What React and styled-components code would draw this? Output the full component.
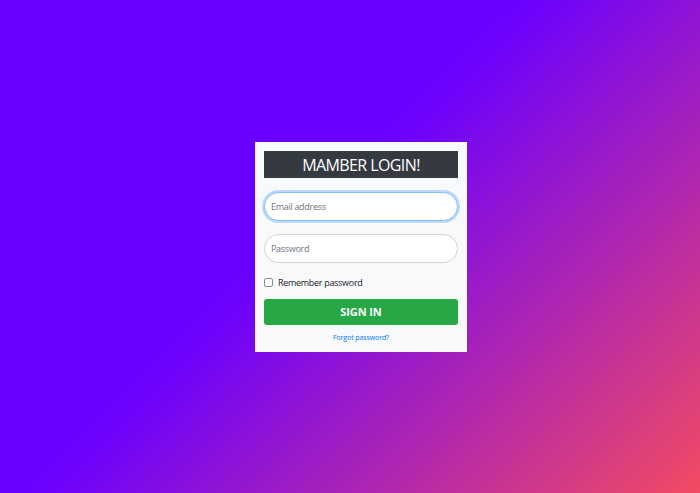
import React from 'react';
import styled, { createGlobalStyle } from 'styled-components';

const GlobalStyle = createGlobalStyle`
  html, body {
    margin: 0;
    padding: 0;
  }
  body {
    font-family: "Open Sans", "Noto Sans", "Liberation Sans", sans-serif;
  }
`;

const Page = styled.div`
  width: 100%;
  min-height: 100vh;
  display: flex;
  align-items: center;
  justify-content: center;
  background: linear-gradient(135deg, #6a00ff 0%, #6a00ff 44%, #f24b62 100%);
`;

const Card = styled.form`
  width: 194px;
  padding: 9px;
  margin-left: 22px;
  background: #f8f9fa;
  display: flex;
  flex-direction: column;
`;

const Title = styled.h1`
  margin: 0 0 14px;
  height: 27px;
  background: #343a40;
  color: #fff;
  font-size: 16px;
  font-weight: 400;
  line-height: 28px;
  letter-spacing: -0.6px;
  text-align: center;
`;

const Input = styled.input`
  box-sizing: border-box;
  width: 100%;
  height: 29px;
  margin-bottom: ${(p) => p.mb || 13}px;
  padding: 0 6px;
  border-radius: 15px;
  border: 1px solid ${(p) => (p.focused ? '#80bdff' : '#ced4da')};
  box-shadow: ${(p) => (p.focused ? '0 0 0 2px rgba(0, 123, 255, 0.25)' : 'none')};
  background: #fff;
  font-family: inherit;
  font-size: 9px;
  letter-spacing: -0.3px;
  color: #495057;
  outline: none;

  &::placeholder {
    color: #6c757d;
  }
`;

const CheckRow = styled.label`
  display: flex;
  align-items: center;
  gap: 5px;
  height: 12px;
  margin: 0 0 10px;
  font-size: 9px;
  letter-spacing: -0.3px;
  color: #212529;
`;

const Box = styled.span`
  box-sizing: border-box;
  width: 9px;
  height: 9px;
  border: 1px solid #8a8a8a;
  border-radius: 2px;
  background: #fff;
`;

const Button = styled.button`
  height: 26px;
  border: none;
  border-radius: 3px;
  background: #28a745;
  color: #fff;
  font-family: inherit;
  font-size: 11px;
  font-weight: 700;
  letter-spacing: -0.1px;
  cursor: pointer;
`;

const Forgot = styled.a`
  display: block;
  margin-top: 8px;
  font-size: 7px;
  letter-spacing: -0.1px;
  color: #007bff;
  text-align: center;
  text-decoration: none;
  line-height: 10px;
`;

export default function App() {
  return (
    <>
      <GlobalStyle />
      <Page>
        <Card onSubmit={(e) => e.preventDefault()}>
          <Title>MAMBER LOGIN!</Title>
          <Input type="email" placeholder="Email address" focused autoFocus />
          <Input type="password" placeholder="Password" mb={14} />
          <CheckRow>
            <Box />
            Remember password
          </CheckRow>
          <Button type="submit">SIGN IN</Button>
          <Forgot href="#">Forgot password?</Forgot>
        </Card>
      </Page>
    </>
  );
}
